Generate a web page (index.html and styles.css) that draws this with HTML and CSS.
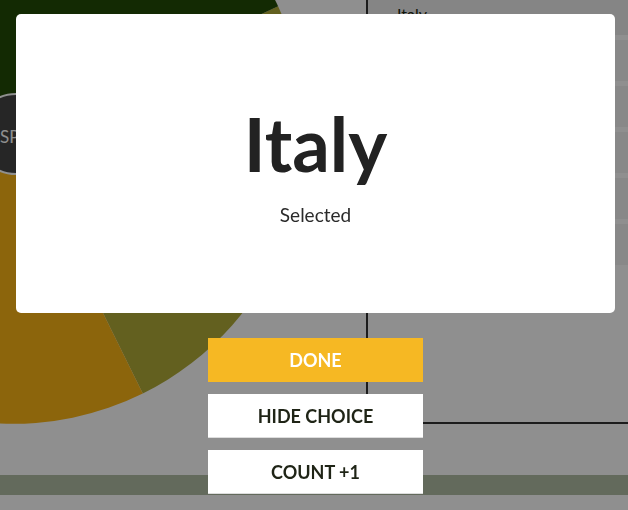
FILE: index.html
```html
<!DOCTYPE html>
<html lang="en">
<head>
<meta charset="utf-8">
<title>Italy selected</title>
<link rel="stylesheet" href="styles.css">
</head>
<body>
<div class="app">
  <div class="main">
    <div class="chart-panel">
      <svg class="pie" width="366" height="475" viewBox="0 0 366 475">
        <path class="seg-olive" d="M13 131 L278.1 6.2 A293 293 0 0 1 142.8 393.5 Z"/>
        <path class="seg-mustard" d="M13 131 L142.8 393.5 A293 293 0 0 1 -280 131 Z"/>
        <path class="seg-green" d="M13 131 L-280 131 A293 293 0 0 1 278.1 6.2 Z"/>
        <circle class="hole" cx="16" cy="134" r="40"/>
        <text class="hole-label" x="0" y="143">SPAIN</text>
      </svg>
    </div>
    <div class="list-panel">
      <div class="row row-first selected"><span class="row-name">Italy</span></div>
      <div class="row"><span class="row-name">Spain</span></div>
      <div class="row"><span class="row-name">France</span></div>
      <div class="row"><span class="row-name">Germany</span></div>
      <div class="row"><span class="row-name">Greece</span></div>
      <div class="row"><span class="row-name">Portugal</span></div>
    </div>
  </div>
  <div class="band"></div>
</div>

<div class="backdrop">
  <div class="modal">
    <h1 class="modal-title">Italy</h1>
    <p class="modal-sub">Selected</p>
  </div>
  <div class="actions">
    <button class="btn btn-primary">Done</button>
    <button class="btn btn-secondary">Hide choice</button>
    <button class="btn btn-secondary">Count +1</button>
  </div>
</div>
</body>
</html>
```
FILE: styles.css
```css
html, body {
  margin: 0;
  padding: 0;
}
body {
  font-family: Lato, "Open Sans", sans-serif;
  background: #ffffff;
  width: 628px;
  height: 510px;
  overflow: hidden;
}

.app {
  width: 628px;
  height: 510px;
  background: #ffffff;
  overflow: hidden;
}

.main {
  display: flex;
  height: 475px;
}

.chart-panel {
  width: 366px;
  flex: none;
}
.pie {
  display: block;
  overflow: visible;
}
.seg-green { fill: #234b07; }
.seg-mustard { fill: #fab516; }
.seg-olive { fill: #b1ab38; }
.hole {
  fill: #444444;
  stroke: #ffffff;
  stroke-width: 2;
}
.hole-label {
  fill: #ffffff;
  font-family: Lato, sans-serif;
  font-size: 17px;
}

.list-panel {
  flex: 1;
  height: 424px;
  box-sizing: border-box;
  border-left: 2px solid #333333;
  border-bottom: 2px solid #333333;
  display: flex;
  flex-direction: column;
  gap: 5px;
}
.row {
  height: 41px;
  flex: none;
  background: #f3f3f3;
  padding-left: 29px;
  font-size: 16px;
  line-height: 27px;
  color: #1f2a14;
}
.row-first {
  height: 35px;
}
.selected {
  background: #eeeeee;
}

.band {
  height: 20px;
  background: #b0bea4;
}

.backdrop {
  position: fixed;
  inset: 0;
  background: rgba(0, 0, 0, 0.44);
  display: flex;
  flex-direction: column;
  align-items: center;
  padding: 14px 13px 0 16px;
}

.modal {
  width: 599px;
  height: 299px;
  box-sizing: border-box;
  background: #ffffff;
  border-radius: 5px;
  padding-top: 93px;
  text-align: center;
}
.modal-title {
  margin: 0;
  font-size: 74px;
  line-height: 74px;
  font-weight: 700;
  color: #222222;
}
.modal-sub {
  margin: 22px 0 0;
  font-size: 19px;
  line-height: 24px;
  color: #2a2a2a;
}

.actions {
  margin-top: 25px;
  display: flex;
  flex-direction: column;
  gap: 12px;
}
.btn {
  width: 215px;
  height: 44px;
  border: none;
  margin: 0;
  padding: 0;
  font-family: Lato, sans-serif;
  font-size: 18px;
  font-weight: 700;
  text-transform: uppercase;
  cursor: pointer;
}
.btn-primary {
  background: #f6b823;
  color: #ffffff;
}
.btn-secondary {
  background: #ffffff;
  color: #1f2416;
  border-bottom: 1px solid #dddddd;
}
```
